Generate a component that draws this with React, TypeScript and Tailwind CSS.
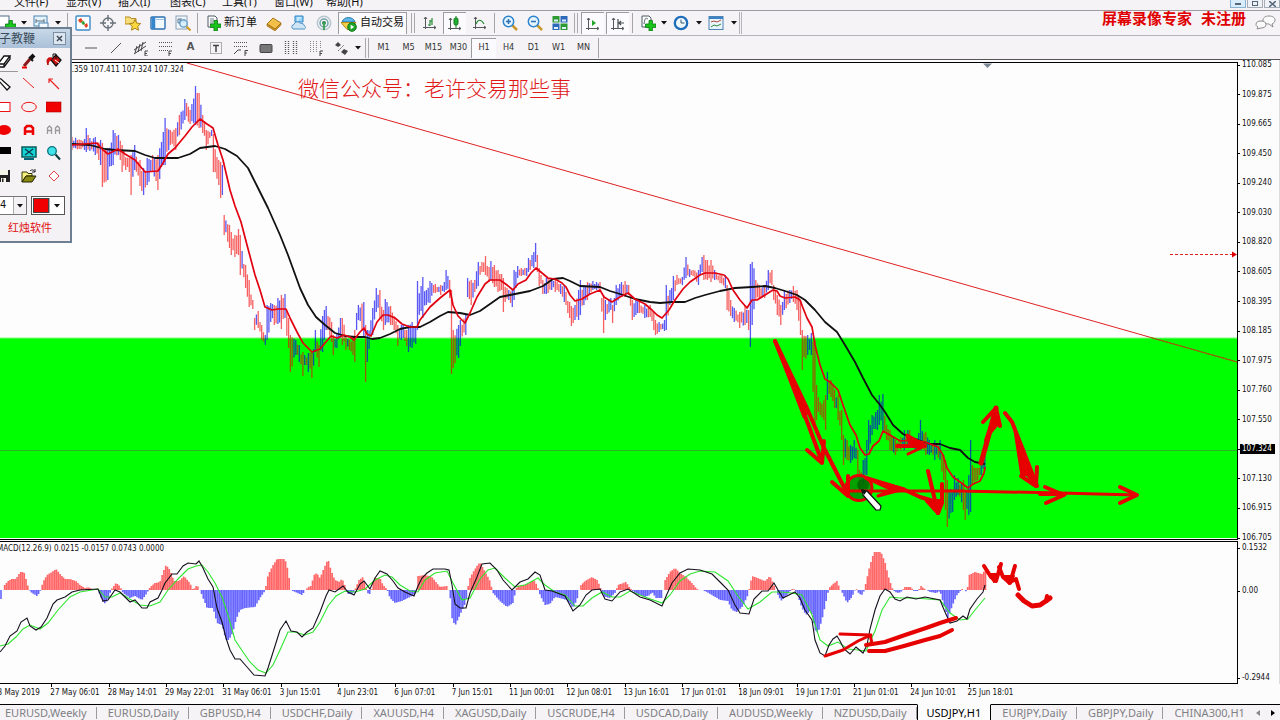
import type { ReactNode } from 'react';

type Pt = [number, number];

const MENU = ['文件(F)', '显示(V)', '插入(I)', '图表(C)', '工具(T)', '窗口(W)', '帮助(H)'];
const PERIODS = ['M1', 'M5', 'M15', 'M30', 'H1', 'H4', 'D1', 'W1', 'MN'];
const PRICES = [
  '110.085', '109.875', '109.665', '109.450', '109.240', '109.030', '108.820', '108.605', '108.395',
  '108.185', '107.975', '107.760', '107.550', '107.324', '107.130', '106.915', '106.705',
];
const TIMES = [
  '23 May 2019', '27 May 06:01', '28 May 14:01', '29 May 22:01', '31 May 06:01', '3 Jun 15:01',
  '4 Jun 23:01', '6 Jun 07:01', '7 Jun 15:01', '11 Jun 00:01', '12 Jun 08:01', '13 Jun 16:01',
  '17 Jun 01:01', '18 Jun 09:01', '19 Jun 17:01', '21 Jun 01:01', '24 Jun 10:01', '25 Jun 18:01',
];
const TABS = [
  'EURUSD,Weekly', 'EURUSD,Daily', 'GBPUSD,H4', 'USDCHF,Daily', 'XAUUSD,H4', 'XAGUSD,Daily', 'USCRUDE,H4',
  'USDCAD,Daily', 'AUDUSD,Weekly', 'NZDUSD,Daily', 'USDJPY,H1', 'EURJPY,Daily', 'GBPJPY,Daily', 'CHINA300,H1',
];

// x, high, low
const RANGE = [
  72, 137, 150, 84, 139, 150, 87, 128, 152, 90, 138, 151, 95, 137, 155, 100, 140, 165, 103, 143, 187, 108, 148, 180, 113, 130, 165,
  118, 135, 155, 122, 145, 172, 130, 158, 172, 131, 155, 195, 135, 145, 170, 140, 160, 186, 143, 168, 195, 148, 158, 185,
  152, 155, 172, 158, 155, 190, 163, 132, 165, 165, 118, 165, 170, 130, 145, 175, 128, 150, 180, 115, 135, 185, 99, 120,
  190, 110, 124, 196, 86, 125, 199, 93, 128, 203, 115, 133, 207, 130, 150, 211, 130, 136, 214, 134, 172, 218, 160, 185,
  221, 162, 198, 223, 165, 195, 225, 215, 235, 229, 225, 248, 232, 232, 255, 235, 235, 257, 238, 229, 255, 241, 235, 275,
  245, 265, 288, 249, 280, 307, 252, 300, 309, 254, 318, 330, 258, 311, 328, 262, 325, 340, 265, 335, 345, 268, 305, 340,
  271, 303, 322, 275, 305, 325, 278, 298, 324, 281, 295, 329, 285, 294, 318, 288, 318, 348, 291, 335, 372, 295, 340, 355,
  299, 345, 362, 303, 352, 376, 305, 355, 365, 308, 353, 372, 312, 352, 378, 316, 330, 352, 319, 345, 367, 322, 316, 352,
  325, 310, 340, 327, 306, 330, 331, 322, 342, 333, 335, 355, 337, 334, 348, 340, 318, 338, 343, 318, 345, 346, 335, 350,
  350, 340, 350, 354, 330, 362, 356, 313, 330, 359, 305, 320, 363, 302, 338, 365, 325, 382, 368, 330, 362, 372, 308, 335,
  376, 288, 312, 380, 290, 318, 383, 310, 330, 386, 299, 325, 390, 306, 325, 395, 316, 330, 398, 325, 346, 403, 325, 338,
  408, 325, 352, 412, 322, 348, 415, 328, 344, 418, 281, 330, 422, 277, 318, 426, 290, 305, 430, 281, 303, 435, 284, 293,
  440, 285, 295, 444, 282, 292, 447, 270, 290, 449, 280, 298, 451, 290, 374, 454, 330, 368, 458, 325, 358, 461, 320, 346,
  465, 315, 335, 467, 278, 297, 471, 280, 305, 475, 280, 292, 478, 262, 286, 482, 262, 272, 485, 256, 275, 489, 267, 282,
  491, 261, 280, 494, 265, 287, 498, 270, 292, 502, 274, 290, 503, 278, 312, 508, 290, 300, 512, 290, 307, 515, 270, 300,
  517, 266, 278, 521, 268, 276, 526, 268, 276, 529, 258, 272, 533, 252, 268, 535, 243, 262, 538, 255, 272, 540, 268, 286,
  543, 280, 294, 547, 278, 294, 552, 278, 290, 556, 280, 292, 561, 284, 294, 565, 285, 302, 569, 302, 318, 572, 306, 326,
  575, 305, 320, 578, 290, 320, 580, 280, 315, 584, 285, 305, 588, 282, 300, 592, 281, 290, 596, 282, 290, 600, 282, 292,
  603, 295, 333, 606, 300, 320, 610, 298, 310, 612, 305, 323, 617, 285, 305, 621, 282, 297, 625, 281, 297, 629, 285, 295,
  632, 300, 320, 636, 300, 315, 640, 302, 313, 645, 305, 318, 650, 305, 317, 654, 312, 330, 656, 320, 335, 660, 322, 332,
  664, 320, 331, 667, 285, 330, 670, 290, 305, 673, 276, 300, 677, 275, 285, 682, 277, 285, 686, 257, 278, 690, 269, 277,
  694, 270, 276, 698, 270, 285, 702, 257, 272, 704, 255, 280, 707, 260, 280, 711, 260, 282, 715, 270, 280, 720, 275, 283,
  725, 275, 288, 728, 285, 310, 731, 300, 316, 735, 308, 322, 740, 312, 328, 745, 305, 325, 749, 310, 330, 751, 264, 347,
  753, 262, 325, 756, 280, 300, 760, 285, 298, 765, 285, 298, 768, 270, 290, 771, 270, 285, 774, 285, 300, 778, 295, 315,
  781, 305, 325, 785, 290, 310, 790, 290, 303, 793, 286, 302, 797, 290, 310, 800, 300, 335, 803, 330, 370, 808, 335, 355,
  812, 333, 355, 814, 340, 425, 817, 385, 420, 821, 402, 415, 825, 395, 430, 827, 372, 400, 831, 380, 397, 835, 390, 408,
  838, 395, 420, 841, 410, 440, 843, 435, 465, 847, 440, 460, 851, 445, 463, 855, 440, 458, 858, 450, 475, 860, 470, 490,
  864, 460, 485, 866, 440, 475, 869, 420, 450, 873, 415, 435, 877, 410, 430, 880, 395, 425, 883, 394, 430, 886, 425, 440,
  890, 430, 450, 895, 440, 455, 900, 437, 450, 905, 430, 450, 910, 430, 448, 915, 440, 450, 921, 420, 450, 925, 432, 455,
  930, 440, 455, 935, 440, 460, 940, 440, 460, 943, 455, 480, 945, 460, 510, 948, 480, 527, 952, 490, 512, 955, 475, 500,
  958, 478, 495, 963, 480, 510, 966, 490, 520, 969, 475, 515, 970, 440, 512, 973, 465, 485, 977, 468, 480, 981, 462, 475,
  985, 440, 470,
];

const FAST_MA =
  '72,145 97,143 103,150 108,154 118,149 125,154 135,160 145,172 158,171 163,163 168,154 175,148 185,136 192,127 200,119 207,124 213,128 218,145 223,160 230,190 235,206 241,222 247,245 255,275 260,290 265,307 272,310 278,309 286,309 291,320 297,332 303,343 312,352 320,349 325,343 331,336 337,338 344,335 350,337 354,340 360,332 364,328 367,334 371,336 377,322 383,315 388,315 395,318 402,324 410,327 417,327 420,320 430,307 440,298 450,290 453,305 458,316 465,323 470,313 477,297 485,284 490,280 500,280 507,285 513,290 518,284 526,280 531,273 536,268 542,273 548,278 555,279 562,283 566,287 570,295 575,301 582,299 590,294 600,290 604,297 612,302 620,297 628,293 635,299 645,304 652,310 657,315 662,318 669,310 675,300 683,289 690,282 700,275 705,273 715,273 724,275 728,279 733,290 740,300 747,308 752,300 757,300 765,295 773,290 777,291 780,296 785,298 795,297 800,300 803,308 807,318 812,327 815,345 820,365 825,379 830,382 838,390 843,405 850,425 856,435 860,448 865,455 869,454 873,446 879,441 883,431 890,435 900,441 912,440 925,442 938,447 943,455 947,468 953,477 960,482 968,488 973,484 980,481 984,473 985,467';
const SLOW_MA =
  '72,144 90,145 105,149 115,150 135,151 145,155 155,158 165,158 178,158 190,154 200,148 215,146 225,149 237,156 248,168 258,188 268,208 280,235 288,255 300,288 308,305 316,317 325,325 335,333 345,336 355,337 365,337 372,339 380,338 390,334 400,329 410,327 420,327 430,322 440,316 448,312 460,313 470,315 480,311 490,304 500,297 510,295 520,293 530,291 543,286 553,279 563,278 570,281 580,286 600,287 610,291 620,294 635,299 650,302 660,303 672,302 685,302 695,298 705,295 720,291 735,288 752,287 765,286 775,288 785,291 797,295 805,300 815,310 825,322 837,332 845,345 855,362 863,378 872,395 880,405 885,412 893,425 903,434 912,438 930,444 940,444 950,448 960,450 968,458 975,462 985,464';
const MACD_LINE =
  '0,652 5,646 10,636 17,631 21,622 27,618 30,626 36,630 41,627 47,618 53,604 57,600 65,597 72,592 80,590 98,589 103,601 108,600 115,590 120,592 125,597 130,602 135,600 142,608 147,608 150,602 158,598 162,590 165,583 172,574 177,574 183,566 188,563 196,564 199,561 203,568 208,579 213,587 217,608 222,622 226,638 230,650 235,659 240,659 247,667 254,675 265,676 268,668 275,646 280,630 286,621 291,631 297,632 302,637 307,632 313,628 320,612 326,596 329,590 335,592 343,586 348,592 354,595 360,584 364,581 370,589 375,578 380,571 387,574 393,581 398,588 405,592 414,596 418,586 422,578 427,573 433,569 445,569 449,570 452,585 455,604 460,608 466,608 470,593 477,577 482,564 490,563 497,570 503,580 512,590 520,582 528,579 535,572 540,575 545,590 552,591 565,596 573,611 580,605 586,595 592,590 600,589 605,599 612,601 620,592 628,589 640,597 650,600 662,606 667,594 672,583 680,573 688,569 700,570 712,574 720,582 728,590 735,605 740,613 749,614 754,599 762,591 768,591 774,583 778,590 783,598 795,592 800,598 805,610 812,620 815,640 820,653 825,656 829,645 833,639 837,636 840,641 844,649 850,654 856,647 863,653 867,645 870,629 875,610 880,596 885,589 890,592 895,599 900,601 907,597 916,599 925,597 940,600 945,612 950,623 957,621 963,616 967,619 970,609 977,599 983,592 985,585';
const SIGNAL_LINE =
  '0,646 8,644 16,637 23,629 30,625 40,629 48,623 58,610 70,597 80,592 98,589 105,597 112,597 120,593 128,598 140,605 150,606 160,602 168,590 178,579 188,569 196,566 202,565 208,572 215,583 222,597 228,615 235,640 243,652 250,662 258,670 266,673 273,665 280,650 288,632 295,632 305,635 313,632 320,622 328,606 336,596 345,591 355,592 365,589 375,580 385,575 392,577 400,585 410,591 418,592 425,580 435,573 447,571 453,583 462,600 470,598 480,579 488,570 495,568 505,578 515,587 525,585 538,578 545,585 555,592 565,595 575,606 583,606 592,598 602,592 612,597 620,597 630,591 645,597 662,603 670,595 680,581 690,574 700,571 715,572 728,581 738,596 748,609 760,602 772,592 780,592 792,593 802,595 812,615 820,640 828,646 838,642 848,649 858,650 866,651 875,631 882,610 890,597 900,598 915,598 940,600 950,613 960,620 968,619 975,610 985,598';

// x, height above (+) or below (-) the zero line
const HIST = [
  0, -9, 2, -9, 3, 3, 8, 9, 12, 11, 16, 11, 20, 18, 24, 18, 27, 8, 29, 0, 32, -3, 37, -6, 40, -2, 43, 8, 47, 15, 52, 18, 56, 21, 60, 16,
  65, 11, 70, 11, 76, 9, 80, 5, 85, 2, 88, 3, 92, 1, 98, 0, 100, -5, 104, -14, 108, -10, 111, 0, 116, 7, 120, 4, 123, -3,
  130, -8, 135, -6, 142, -10, 147, -3, 150, 3, 155, 7, 160, 8, 163, 18, 166, 25, 170, 20, 174, 9, 179, 9, 184, 14, 190, 7,
  193, 0, 197, 5, 200, 0, 203, -8, 207, -18, 213, -18, 217, -33, 222, -35, 226, -50, 229, -50, 233, -42, 236, -30, 240, -20,
  245, -18, 255, -17, 260, -8, 265, -1, 268, 15, 273, 25, 277, 31, 285, 31, 288, 20, 291, 0, 295, -2, 302, -5, 305, -1,
  308, 3, 311, 4, 314, 15, 317, 17, 320, 12, 324, 22, 328, 31, 331, 20, 335, 10, 340, 8, 342, 12, 345, 4, 347, -4, 353, -4,
  356, 3, 359, 10, 363, 13, 366, 2, 369, -6, 372, 2, 374, 12, 380, 12, 383, 5, 387, 1, 390, -8, 395, -13, 402, -11, 410, -7,
  416, -3, 418, 14, 425, 15, 432, 13, 436, 8, 440, 3, 447, 4, 450, -5, 452, -28, 455, -36, 460, -25, 466, -12, 469, 10,
  473, 18, 477, 24, 480, 28, 483, 22, 487, 15, 490, 9, 493, -3, 500, -11, 507, -17, 513, -13, 517, 4, 522, 5, 528, 6,
  534, 10, 537, 5, 540, -5, 545, -15, 550, -14, 555, -7, 560, -8, 567, -10, 573, -18, 577, -10, 580, 4, 585, 9, 592, 13,
  597, 10, 600, 4, 603, -6, 610, -8, 615, -3, 618, 5, 626, 8, 630, 2, 635, -3, 645, -7, 650, -5, 652, -2, 656, -8, 662, -8,
  665, 10, 670, 18, 675, 22, 680, 17, 686, 13, 692, 7, 697, 1, 705, -1, 712, -5, 720, -10, 728, -11, 732, -20, 737, -22,
  743, -16, 748, -5, 750, 5, 752, 14, 760, 11, 765, 9, 770, 14, 774, 5, 777, -3, 781, -11, 788, -4, 793, 2, 797, -3,
  802, -18, 806, -25, 811, -20, 815, -40, 818, -43, 822, -30, 826, -12, 829, 2, 833, 6, 837, 9, 840, 1, 843, -4, 847, -13,
  852, -7, 856, 2, 859, -4, 863, -5, 866, 8, 870, 25, 874, 38, 881, 38, 885, 28, 889, 12, 893, 0, 897, -3, 901, -2, 905, 3,
  911, 3, 914, -1, 918, -1, 921, 4, 925, 1, 930, -2, 936, -3, 940, -1, 943, -12, 948, -28, 953, -14, 957, -5, 962, 1,
  967, -2, 969, 15, 975, 18, 982, 16, 985, 20,
];

const STEP = 1.79;
const ZERO = 590;

function sample(data: number[], width: number, col: number, x: number) {
  for (let i = 0; i + width < data.length; i += width) {
    const a = data[i];
    const b = data[i + width];
    if (x <= b) {
      const t = Math.max(0, (x - a) / (b - a));
      return data[i + col] + (data[i + width + col] - data[i + col]) * t;
    }
  }
  return data[data.length - width + col];
}

// Index of the keyframe that falls on this bar, or -1
function keyAt(x: number) {
  for (let i = 0; i < RANGE.length; i += 3) {
    if (Math.abs(RANGE[i] - x) <= STEP / 2) return i;
  }
  return -1;
}

function noise(n: number) {
  const s = Math.sin(n * 12.9898) * 43758.5453;
  return s - Math.floor(s);
}

function buildBars() {
  let up = '';
  let down = '';
  let prev = 143;
  for (let i = 0; 72 + i * STEP < 986; i++) {
    const x = 72 + i * STEP;
    const key = keyAt(x);
    let top: number;
    let bottom: number;
    if (key >= 0) {
      top = RANGE[key + 1];
      bottom = RANGE[key + 2];
    } else {
      const high = sample(RANGE, 3, 1, x);
      const low = sample(RANGE, 3, 2, x);
      const span = low - high;
      top = high + noise(i) * span * 0.3;
      bottom = low - noise(i + 500) * span * 0.3;
    }
    const mid = (top + bottom) / 2;
    const seg = `M${x.toFixed(1)} ${top.toFixed(1)}V${bottom.toFixed(1)}`;
    if (mid + (noise(i + 90) - 0.5) * 14 < prev) up += seg;
    else down += seg;
    prev = mid;
  }
  return { up, down };
}

function buildHist() {
  let pos = '';
  let neg = '';
  for (let x = 1; x < 987; x += STEP) {
    const v = sample(HIST, 2, 1, x);
    if (Math.abs(v) < 0.6) continue;
    const seg = `M${x.toFixed(1)} ${ZERO}v${(-v).toFixed(1)}`;
    if (v > 0) pos += seg;
    else neg += seg;
  }
  return { pos, neg };
}

const bars = buildBars();
const hist = buildHist();

function Icon({ children, size = 16 }: { children: ReactNode; size?: number }) {
  return (
    <svg width={size} height={size} viewBox="0 0 16 16" fill="none" className="shrink-0">
      {children}
    </svg>
  );
}

function Tool({ label, children, className = 'w-[25px]' }: { label: string; children: ReactNode; className?: string }) {
  return (
    <button aria-label={label} className={`flex h-[22px] shrink-0 items-center justify-center ${className}`}>
      {children}
    </button>
  );
}

function Caret() {
  return (
    <svg width="6" height="4" viewBox="0 0 6 4" className="shrink-0">
      <path d="M0 0h6L3 3.6z" fill="#111" />
    </svg>
  );
}

function Sep() {
  return <span className="mx-[2px] h-[20px] w-px shrink-0 bg-[#a5a5a8]" />;
}

function Grip() {
  return <span className="mx-[2px] h-[20px] w-[4px] shrink-0 border-x border-[#a9a9ac]" />;
}

const PRESSED = 'w-[23px] mx-px border-l border-t border-[#9c9ca0] bg-[#fbfafc]';

const plus = (
  <path d="M9 5.5h3.4V9H16v3.4h-3.6V16H9v-3.6H5.5V9H9z" fill="#19c51c" stroke="#0b7a10" strokeWidth=".8" />
);

const axes = <path d="M3.5 2v12M1 12.5h13M2 4l1.5-2L5 4M12 11l2 1.5-2 1.5" stroke="#55595c" />;

function MainToolbar() {
  return (
    <div className="flex h-[25px] items-center border-t border-[#9d9da1]">
      <Tool label="新图表" className="w-[16px]">
        <Icon><rect x="-1" y="1" width="10" height="11" fill="#fff" stroke="#4a6d84" />{plus}</Icon>
      </Tool>
      <Tool label="新图表菜单" className="w-[15px]"><Caret /></Tool>
      <Tool label="模板" className="w-[20px]">
        <Icon>
          <rect x="1" y="1" width="13" height="10" fill="#e6f3fb" stroke="#4d86b4" />
          <path d="M3 4v4M3 6h8M11 4v4" stroke="#5c6f7e" />
          <rect x="6" y="8" width="9" height="7" fill="#f4faff" stroke="#4d86b4" />
        </Icon>
      </Tool>
      <Tool label="模板菜单" className="w-[14px]"><Caret /></Tool>
      <Sep />
      <Tool label="市场报价">
        <Icon>
          <rect x="1" y="1" width="14" height="14" rx="1" fill="#fff" stroke="#3c8ccb" strokeWidth="1.4" />
          <path d="M3 5l3-2 2 3-3 2z" fill="#e5401f" /><path d="M6 7l3-1 1 3-2 1z" fill="#2aa02f" />
          <path d="M9 10l3-2 1 3-2 2z" fill="#e5401f" />
        </Icon>
      </Tool>
      <Tool label="数据窗口">
        <Icon>
          <circle cx="8" cy="8" r="5" stroke="#667079" strokeWidth="1.3" />
          <path d="M8 0v6M8 10v6M0 8h6M10 8h6" stroke="#667079" strokeWidth="1.4" />
        </Icon>
      </Tool>
      <Tool label="导航">
        <Icon>
          <path d="M0 2h5l1 1.500h5V9H0z" fill="#f7dc77" stroke="#b58d26" />
          <path d="M10 4.500l1.700 3.600 4 .5-2.900 2.700.7 3.900-3.500-1.900-3.500 1.900.7-3.900L4.300 8.600l4-.5z" fill="#fbd83d" stroke="#a8801c" />
        </Icon>
      </Tool>
      <Tool label="终端">
        <Icon>
          <rect x="1" y="2" width="14" height="12" rx="1" fill="#f2f9ff" stroke="#2b6fae" strokeWidth="1.4" />
          <path d="M3.500 2v12" stroke="#3686cd" strokeWidth="3.500" /><path d="M6 4.500h8" stroke="#9cc4e2" />
        </Icon>
      </Tool>
      <Tool label="策略测试">
        <Icon>
          <rect x="1" y="1" width="11" height="13" fill="#f2f6fa" stroke="#8aa2b5" />
          <path d="M3 4h2v4H3zM6 3v5M9 4v4" stroke="#58768d" />
          <circle cx="8.500" cy="8.500" r="3.700" fill="#d7edfb" fillOpacity=".8" stroke="#5a9bcd" strokeWidth="1.300" />
          <path d="M11.500 11.500l4 4" stroke="#d19a20" strokeWidth="2" />
        </Icon>
      </Tool>
      <Sep />
      <button className="flex h-[22px] w-[61px] shrink-0 items-center gap-[3px] pl-[5px]">
        <Icon>
          <path d="M3 1h7l2 2v9H3z" fill="#fff" stroke="#4b5a66" /><path d="M5 4h4M5 6h5M5 8h3" stroke="#6d7f8c" />{plus}
        </Icon>
        <span className="whitespace-nowrap">新订单</span>
      </button>
      <Tool label="编辑器">
        <Icon>
          <path d="M1 9l6-6 8 5-6 6z" fill="#f2c04a" stroke="#a8761a" /><path d="M1 9v2l8 5 6-6V8l-6 6z" fill="#c98f23" stroke="#a06d12" strokeWidth=".6" />
        </Icon>
      </Tool>
      <Tool label="虚拟主机">
        <Icon>
          <path d="M4 1h8v6H4z" fill="#8fd0f7" stroke="#2f84c4" /><path d="M6 3h4M6 5h2" stroke="#fff" />
          <path d="M2 14a2.500 2.500 0 0 1 1-4.600A3.500 3.500 0 0 1 9.500 8.600 3 3 0 0 1 13.500 11 1.700 1.700 0 0 1 13.600 14z" fill="#cfe5f5" stroke="#4f93c6" />
        </Icon>
      </Tool>
      <Tool label="信号">
        <Icon>
          <circle cx="8" cy="8" r="6.700" stroke="#b7c7d0" strokeWidth="1.500" /><circle cx="8" cy="8" r="4" stroke="#6fa4a8" strokeWidth="1.500" />
          <circle cx="8" cy="8" r="2" fill="#2f8b50" /><path d="M8 8v7" stroke="#43a35d" strokeWidth="2" />
        </Icon>
      </Tool>
      <button className="mx-[2px] flex h-[22px] w-[69px] shrink-0 items-center gap-[3px] border border-b-0 border-[#9c9ca0] bg-[#fbfafc] pl-[2px]">
        <Icon>
          <path d="M1 6c2-6 11-6 13 0z" fill="#5cb7ea" stroke="#2a78a8" /><path d="M0 6.500h15l-6 7H6z" fill="#f4cf49" stroke="#b58a1d" />
          <circle cx="11" cy="11" r="4.300" fill="#20a72a" stroke="#0c7517" /><path d="M9.700 8.800v4.400L13.200 11z" fill="#fff" />
        </Icon>
        <span className="whitespace-nowrap">自动交易</span>
      </button>
      <Grip />
      <Tool label="柱状图"><Icon>{axes}<path d="M8 5v6M8 6h2M10 3v7M6 10h2" stroke="#258a33" strokeWidth="1.200" /></Icon></Tool>
      <Tool label="阴阳烛" className={PRESSED}>
        <Icon>{axes}<path d="M9 0v12" stroke="#138223" /><rect x="7" y="2" width="4" height="7" rx="1.500" fill="#1fae31" stroke="#107a1e" /></Icon>
      </Tool>
      <Tool label="折线图"><Icon>{axes}<path d="M4 9c2-5 5-5 8 0" stroke="#258a33" strokeWidth="1.200" /></Icon></Tool>
      <Sep />
      <Tool label="放大">
        <Icon>
          <path d="M10 10l5 5" stroke="#c7972b" strokeWidth="2.500" /><circle cx="6.500" cy="6.500" r="5.200" fill="#e4f4ff" stroke="#2d83cc" strokeWidth="1.500" />
          <path d="M4 6.500h5M6.500 4v5" stroke="#2a6fb4" strokeWidth="1.500" />
        </Icon>
      </Tool>
      <Tool label="缩小">
        <Icon>
          <path d="M10 10l5 5" stroke="#c7972b" strokeWidth="2.500" /><circle cx="6.500" cy="6.500" r="5.200" fill="#e4f4ff" stroke="#2d83cc" strokeWidth="1.500" />
          <path d="M4 6.500h5" stroke="#2a6fb4" strokeWidth="1.500" />
        </Icon>
      </Tool>
      <Tool label="平铺">
        <Icon>
          <rect x=".5" y="1" width="7" height="6.500" fill="#2d9a34" /><rect x="8.500" y="1" width="7" height="6.500" fill="#2c68ba" />
          <rect x=".5" y="8.500" width="7" height="6.500" fill="#2c68ba" /><rect x="8.500" y="8.500" width="7" height="6.500" fill="#2d9a34" />
          <path d="M2 4.500h4v2H2zM10 4.500h4v2h-4zM2 12h4v2H2zM10 12h4v2h-4z" fill="#dff0ff" />
        </Icon>
      </Tool>
      <Grip />
      <Tool label="自动滚动" className={PRESSED}><Icon>{axes}<path d="M7 4v6l4-3z" fill="#20a72a" /></Icon></Tool>
      <Tool label="图表平移" className={PRESSED}><Icon>{axes}<path d="M8 3v9M14 7H9M11 5L9 7l2 2" stroke="#474b4e" strokeWidth="1.200" /></Icon></Tool>
      <Sep />
      <Tool label="指标">
        <Icon><path d="M2 1h7l2 2v9H2z" fill="#fff" stroke="#4b5a66" /><path d="M4 9c1-7 2-6 4-5" stroke="#55606a" />{plus}</Icon>
      </Tool>
      <Tool label="指标菜单" className="w-[7px]"><Caret /></Tool>
      <Tool label="周期" className="w-[28px]">
        <Icon>
          <circle cx="8" cy="8" r="6.200" fill="#f2faff" stroke="#1d6dbb" strokeWidth="2.300" /><path d="M8 4.500V8h3.500" stroke="#33566f" />
        </Icon>
      </Tool>
      <Tool label="周期菜单" className="w-[7px]"><Caret /></Tool>
      <Tool label="图表模板" className="w-[28px]">
        <Icon>
          <rect x="1" y="1.500" width="14" height="13" fill="#eaf5ff" stroke="#4a83b4" /><path d="M1 3h14" stroke="#3c82c4" strokeWidth="2" />
          <path d="M3 7l3-1 3 1 4-2" stroke="#b04432" /><path d="M3 12l3-2 3 1 4-2" stroke="#2a8a39" />
        </Icon>
      </Tool>
      <Tool label="图表模板菜单" className="w-[7px]"><Caret /></Tool>
      <span className="ml-[2px] h-[22px] w-[3px] border-x border-[#b5b5b9]" />
    </div>
  );
}

function LineToolbar() {
  return (
    <div className="flex h-[24px] items-center border-t border-[#b3b3b7] pl-[78px]">
      <Tool label="水平线"><Icon><path d="M2 8h12" stroke="#555" /></Icon></Tool>
      <Tool label="趋势线"><Icon><path d="M3 13L13 3" stroke="#555" /></Icon></Tool>
      <Tool label="通道">
        <Icon><path d="M1 10l12-8M1 14l12-8M4 6l-2 7M7 4L5 12M10 2L8 11" stroke="#444" /><path d="M15 11h-3v5h3M12 13.500h2" stroke="#444" /></Icon>
      </Tool>
      <Tool label="斐波纳契">
        <Icon><path d="M1 2.500h13M1 6.500h13M1 10.500h9" stroke="#555" strokeDasharray="1 1" /><path d="M14 11h-3v5M11 13.500h2" stroke="#444" /></Icon>
      </Tool>
      <Tool label="文字"><span className="text-[11px] font-bold text-[#555]">A</span></Tool>
      <Tool label="文字标签">
        <Icon><rect x="2.500" y="2.500" width="11" height="11" stroke="#666" strokeDasharray="1 1" /><path d="M5 5.500h6M8 5.500V12" stroke="#444" strokeWidth="1.500" /></Icon>
      </Tool>
      <Tool label="扇形">
        <Icon><path d="M1 2.500h14M1 6.500h14" stroke="#555" strokeDasharray="1 1" /><path d="M1 14l4-4h3M15 10.500h-3V16M12 13h2" stroke="#444" /></Icon>
      </Tool>
      <Tool label="矩形"><Icon><rect x="2" y="4.500" width="12" height="8" rx="1" fill="#777" stroke="#444" /></Icon></Tool>
      <Tool label="周期线">
        <Icon><path d="M2.500 1v14M5.500 1v14M10.500 1v14M13.500 1v14" stroke="#555" strokeDasharray="1 1" strokeWidth="1.300" /></Icon>
      </Tool>
      <Tool label="时区">
        <Icon><path d="M2.500 1v11M5.500 1v11M8.500 1v11M12.500 1v8" stroke="#888" strokeDasharray="1 1" /><path d="M15 11h-3v5M12 13.500h2" stroke="#444" /></Icon>
      </Tool>
      <Tool label="箭头">
        <Icon><path d="M2 5l3-3 3 3-3 2zM8 12l3-3 4 2-3 4z" fill="#444" /><path d="M5 11l6-6" stroke="#666" strokeDasharray="2 1" /></Icon>
      </Tool>
      <Tool label="箭头菜单" className="w-[10px]"><Caret /></Tool>
      <Grip />
      {PERIODS.map((p) => (
        <button
          key={p}
          className={`flex h-[20px] w-[25px] shrink-0 items-center justify-center text-[9px] text-[#333] ${
            p === 'H1' ? 'border-l border-t border-[#9c9ca0] bg-[#fbfafc]' : ''
          }`}
        >
          {p}
        </button>
      ))}
      <Sep />
    </div>
  );
}

function PaletteTool({ label, children }: { label: string; children: ReactNode }) {
  return (
    <button aria-label={label} className="flex h-[23px] items-center justify-center">
      <Icon>{children}</Icon>
    </button>
  );
}

function Palette() {
  return (
    <section className="absolute -left-[9px] top-[27px] z-20 w-[81px] border-2 border-l-0 border-[#6e7f92] bg-[#f4f2f5] pb-[3px]">
      <header className="flex h-[19px] items-center justify-between bg-linear-to-b from-[#c7d8e8] to-[#abc1d8] pr-[4px] text-[12px] text-[#3c4c5c]">
        <span className="-ml-[4px] whitespace-nowrap">电子教鞭</span>
        <button aria-label="关闭" className="flex h-[13px] w-[13px] items-center justify-center border border-[#7d90a3] bg-[#dbe6f0]">
          <svg width="7" height="7" viewBox="0 0 7 7"><path d="M1 1l5 5M6 1L1 6" stroke="#3f4c58" strokeWidth="1.500" /></svg>
        </button>
      </header>
      <div className="grid grid-cols-3 pt-px pr-[4px]">
        <PaletteTool label="橡皮"><path d="M2 11l6-8h6l-6 8zM2 11v3h6v-3M8 14l6-8V3" fill="#fff" stroke="#111" strokeWidth="1.300" /></PaletteTool>
        <PaletteTool label="画笔"><path d="M9 6L3 13" stroke="#8b1a1a" strokeWidth="3" /><path d="M8 4l4 4" stroke="#111" strokeWidth="2" /><path d="M10 5l3-3" stroke="#111" strokeWidth="4" /><path d="M1 14.500h5" stroke="#e00" strokeWidth="2" /></PaletteTool>
        <PaletteTool label="填充"><path d="M5 7l5-5 5 5-5 6z" fill="#c11" stroke="#111" strokeWidth="1.300" /><path d="M7 4V1h3v5" stroke="#111" /><path d="M6 5C1 4 0 7 2 12c0-3 1-4 3-5z" fill="#d11" stroke="#b00" /><path d="M9 7l4 3" stroke="#fff" /></PaletteTool>
        <span className="col-span-3 -mt-px mr-[48px] h-px bg-[#999]" />
        <PaletteTool label="铅笔"><path d="M2 2l3 1 9 8-3 3-8-9z" fill="#fff" stroke="#111" strokeWidth="1.300" /><path d="M2 2l2 1-1 1z" fill="#111" stroke="#111" /></PaletteTool>
        <PaletteTool label="直线"><path d="M2 2l11 10" stroke="#e22" /></PaletteTool>
        <PaletteTool label="箭头"><path d="M3 3l10 10M3 7V3h4" stroke="#e22" strokeWidth="1.200" /></PaletteTool>
        <PaletteTool label="矩形"><rect x="1" y="3.500" width="13" height="9" fill="#fff" stroke="#e11" /></PaletteTool>
        <PaletteTool label="椭圆"><ellipse cx="8" cy="8" rx="7.300" ry="4.700" stroke="#e11" /></PaletteTool>
        <PaletteTool label="实心矩形"><rect x="0" y="3" width="15" height="10" fill="#f00000" stroke="#a00" strokeWidth=".6" /></PaletteTool>
        <PaletteTool label="实心椭圆"><ellipse cx="8" cy="8" rx="7" ry="5" fill="#f00000" /></PaletteTool>
        <PaletteTool label="文字"><path d="M4 13V6l2-2h4l2 2v7M4 9.500h8" stroke="#e00" strokeWidth="2.500" /></PaletteTool>
        <PaletteTool label="双文字"><path d="M1.500 12V6l2-2 2 2v6M1.500 8.500h4M9.500 12V6l2-2 2 2v6M9.500 8.500h4" stroke="#999" strokeWidth="1.300" /></PaletteTool>
        <PaletteTool label="黑屏"><rect x="0" y="2" width="15" height="7" fill="#000" /></PaletteTool>
        <PaletteTool label="屏幕"><rect x="1" y="2" width="14" height="10" fill="#12d4d4" stroke="#075b5b" strokeWidth="1.500" /><path d="M4 4l8 6M12 4l-8 6" stroke="#134" strokeWidth="1.200" /><path d="M3 14h10" stroke="#067" strokeWidth="2" /></PaletteTool>
        <PaletteTool label="放大镜"><circle cx="6" cy="6" r="4.300" fill="#3fe3ea" stroke="#08727b" strokeWidth="1.300" /><path d="M9.500 9.500l4.500 5" stroke="#06373c" strokeWidth="2" /></PaletteTool>
        <PaletteTool label="保存"><path d="M2 2h12v12H2z" fill="#222" /><path d="M4 2h8v5H4zM5 10h5v4H5z" fill="#f5f5e8" /><path d="M6 10.500h1.500V14H6z" fill="#222" /></PaletteTool>
        <PaletteTool label="打开"><path d="M1 4h5l1 1.500h4V8H5l-4 6z" fill="#f5f080" stroke="#333300" /><path d="M1 14l4-6h10l-4 6z" fill="#8a8a12" stroke="#222200" /><path d="M9 3c2-2 4-1 5 1M14 1v3h-3" stroke="#222" /></PaletteTool>
        <PaletteTool label="清除"><path d="M8 3l5 5-5 5-5-5z" fill="#fff" stroke="#d44" /></PaletteTool>
      </div>
      <div className="mt-[9px] flex h-[19px] justify-between pr-[5px]">
        <div className="relative flex w-[36px] items-center border border-[#777] bg-white">
          <label className="sr-only" htmlFor="line-width" />
          <select id="line-width" defaultValue="4" className="h-full w-full appearance-none pl-[8px] text-[11px]">
            <option>4</option>
          </select>
          <span className="pointer-events-none absolute inset-y-0 right-0 flex w-[13px] items-center justify-center border-l border-[#aaa] bg-[#f4f2f5]"><Caret /></span>
        </div>
        <button aria-label="颜色" className="flex w-[34px] border border-[#555] bg-white p-px">
          <span className="h-full w-[16px] border border-[#444] bg-[#f00000]" />
          <span className="flex h-full flex-1 items-center justify-center border-l border-[#aaa]"><Caret /></span>
        </button>
      </div>
      <p className="mt-[6px] h-[17px] pl-[17px] text-[11px] leading-[16px] text-[#e01010]">红烛软件</p>
    </section>
  );
}

function PriceChart() {
  return (
    <div className="relative h-[478px] border-y border-r border-black bg-[#fefdfe]">
      <svg viewBox="0 63 1237 476" preserveAspectRatio="none" className="block h-full w-full" fill="none">
        <rect x="0" y="338" width="1237" height="200" fill="#00ff00" />
        <path d="M0 338h1237" stroke="#7dff7d" />
        <path d="M0 450.500h1237" stroke="#27b427" />
        <path d="M187 63L1237 362" stroke="#dd2222" />
        <path d="M1150 337.400L1237 362" stroke="#867000" />
        <path d={bars.up} stroke="#0000ee" strokeOpacity=".65" strokeWidth="1.300" />
        <path d={bars.down} stroke="#f00000" strokeOpacity=".62" strokeWidth="1.300" />
        <polyline points={SLOW_MA} stroke="#111" strokeWidth="1.800" strokeLinejoin="round" />
        <polyline points={FAST_MA} stroke="#e00010" strokeWidth="1.700" strokeLinejoin="round" />
        <path d="M983 63.500h9l-4.500 4.500z" fill="#7b8794" />
        <path d="M1170 254.500h62" stroke="#d22" strokeDasharray="3 2" />
        <path d="M1232 251.500l5 3-5 3z" fill="#d00" />
      </svg>
      <p className="absolute left-[58px] top-[1px] text-[8px] leading-[12px] whitespace-nowrap">107.359 107.411 107.324 107.324</p>
      <h1 className="absolute left-[298px] top-[12px] text-[21px] leading-[28px] font-light whitespace-nowrap text-[#e01818]">微信公众号：老许交易那些事</h1>
    </div>
  );
}

function MacdChart() {
  return (
    <div className="relative mt-px h-[143px] border-y border-r border-black bg-[#fefdfe]">
      <svg viewBox="0 542 1237 141" preserveAspectRatio="none" className="block h-full w-full" fill="none">
        <path d={hist.pos} stroke="#ff4040" strokeOpacity=".8" strokeWidth="1.600" />
        <path d={hist.neg} stroke="#4040ff" strokeOpacity=".8" strokeWidth="1.600" />
        <polyline points={SIGNAL_LINE} stroke="#2ee52e" strokeWidth="1.100" />
        <polyline points={MACD_LINE} stroke="#15101c" strokeWidth="1.100" />
      </svg>
      <p className="absolute -left-[3px] top-[1px] text-[8px] leading-[12px] whitespace-nowrap">MACD(12.26.9) 0.0215 -0.0157 0.0743 0.0000</p>
    </div>
  );
}

function Marker({ pts, w = 4 }: { pts: Pt[]; w?: number }) {
  return <polyline points={pts.map((p) => p.join(',')).join(' ')} strokeWidth={w} />;
}

// Pen strokes drawn over both panels
function Annotations() {
  return (
    <svg
      viewBox="0 60 1238 624"
      preserveAspectRatio="none"
      className="pointer-events-none absolute inset-0 h-full w-full"
      fill="none"
      stroke="#e60000"
      strokeLinecap="round"
      strokeLinejoin="round"
    >
      <circle cx="859" cy="488" r="12" fill="#008a00" fillOpacity=".8" stroke="none" />
      <circle cx="863" cy="485" r="6" fill="#005500" fillOpacity=".6" stroke="none" />
      <path d="M775 341l32 72-3 4z" fill="#e60000" strokeWidth="3" />
      <Marker pts={[[775, 341], [801, 405], [822, 462]]} />
      <Marker pts={[[775, 341], [806, 406], [824, 448], [848, 495]]} />
      <Marker pts={[[807, 450], [822, 463], [824, 441]]} />
      <Marker pts={[[832, 482], [848, 496], [848, 476]]} />
      <ellipse cx="859" cy="488" rx="13" ry="12.500" strokeWidth="3" />
      <path d="M868 479l36 10-26 7 14-6z" fill="#e60000" strokeWidth="3" />
      <Marker pts={[[866, 478], [905, 490], [920, 497], [940, 503]]} />
      <Marker pts={[[850, 491], [960, 491], [1060, 493], [1136, 495]]} w={3} />
      <Marker pts={[[928, 471], [933, 492], [938, 513]]} />
      <path d="M927 501l11 12 4-12z" fill="#e60000" strokeWidth="4" />
      <Marker pts={[[942, 484], [942, 503], [938, 513]]} />
      <Marker pts={[[897, 446], [925, 446]]} />
      <path d="M907 435l18 10-15 0z" fill="#e60000" strokeWidth="3" />
      <Marker pts={[[925, 446], [908, 454]]} w={3} />
      <Marker pts={[[981, 463], [988, 438], [996, 408]]} w={5} />
      <path d="M996 409l3 14-14 17z" fill="#e60000" strokeWidth="2" />
      <Marker pts={[[983, 422], [996, 408], [1000, 426]]} />
      <Marker pts={[[1005, 413], [1012, 422], [1023, 450], [1037, 486]]} />
      <path d="M1015 431l7 45 5-2 9 12-13-37z" fill="#e60000" strokeWidth="3" />
      <Marker pts={[[1021, 476], [1036, 486], [1037, 467]]} />
      <Marker pts={[[1045, 487], [1064, 495], [1046, 503]]} />
      <Marker pts={[[1120, 487], [1137, 495], [1120, 503]]} />
      <Marker pts={[[1040, 494], [1065, 494]]} />
      <path d="M862 490l5 1 14 15-1 4-4 0-13-15z" fill="#fff" stroke="#111" strokeWidth="1.200" />
      <path d="M861 489l6 2-3 4z" fill="#111" stroke="none" />
      <Marker pts={[[825, 656], [843, 650], [858, 641], [871, 635]]} w={3} />
      <Marker pts={[[840, 634], [870, 635], [872, 643]]} w={3} />
      <Marker pts={[[866, 645], [885, 642], [905, 635], [926, 628], [940, 623], [956, 618]]} />
      <Marker pts={[[869, 651], [885, 651], [904, 646], [925, 640], [940, 636], [952, 630]]} />
      <path d="M989 574l5 8 5-8zM1003 576l6 8 5-8z" fill="#e60000" strokeWidth="2" />
      <Marker pts={[[984, 566], [991, 577], [996, 581], [1001, 564]]} />
      <Marker pts={[[999, 567], [1003, 577], [1010, 583], [1015, 566]]} />
      <Marker pts={[[1006, 578], [1010, 582], [1016, 579], [1019, 589]]} />
      <Marker pts={[[1018, 595], [1024, 601], [1032, 606], [1040, 605], [1046, 601], [1050, 598]]} w={5} />
      <Marker pts={[[1047, 596], [1046, 601]]} />
    </svg>
  );
}

function AxisLabel({ text, active = false, className = '' }: { text: string; active?: boolean; className?: string }) {
  return (
    <span className={`flex h-[8px] items-center ${className}`}>
      <i className="h-px w-[2px] bg-black" />
      <span className={active ? 'bg-black pr-[3px] pl-[2px] leading-[10px] text-white' : 'pl-[2px] leading-[8px]'}>{text}</span>
    </span>
  );
}

export default function App() {
  return (
    <div className="relative min-h-screen w-full overflow-hidden bg-[#f5f3f6] font-['DejaVu_Sans_Condensed','Noto_Sans','Noto_Sans_CJK_SC',sans-serif] text-[11px] text-[#111]">
      <header className="relative h-[60px] border-b border-[#555]">
        <nav className="flex h-[10px] items-end justify-between overflow-hidden">
          <div className="flex items-end pl-[14px]">
            {MENU.map((m) => (
              <button key={m} className="w-[52px] text-left font-['Noto_Sans','Noto_Sans_CJK_SC',sans-serif] leading-[16px] whitespace-nowrap">{m}</button>
            ))}
          </div>
          <div className="flex gap-px self-start text-[#5a6b7a]">
            <button aria-label="最小化" className="flex h-[8px] w-[16px] items-center justify-center border border-t-0 border-[#89b3d4] bg-[#d9ecfa]"><i className="h-[2px] w-[6px] bg-[#54677a]" /></button>
            <button aria-label="还原" className="flex h-[8px] w-[16px] items-center justify-center border border-t-0 border-[#a4acb6] bg-[#eef1f5]"><i className="h-[5px] w-[6px] border border-[#54677a]" /></button>
            <button aria-label="关闭" className="flex h-[8px] w-[16px] items-center justify-center border border-t-0 border-[#a4acb6] bg-[#eef1f5]">
              <svg width="7" height="6" viewBox="0 0 7 6"><path d="M0 0l7 6M7 0L0 6" stroke="#54677a" strokeWidth="1.500" /></svg>
            </button>
          </div>
        </nav>
        <MainToolbar />
        <LineToolbar />
        <p className="absolute right-[34px] top-[10px] flex gap-[9px] text-[15px] leading-[18px] font-bold whitespace-nowrap text-[#e00000]">
          <span>屏幕录像专家</span><span>未注册</span>
        </p>
        <svg className="absolute right-[4px] top-[15px]" width="21" height="15" viewBox="0 0 21 15" fill="#fbfbfb" stroke="#8b8b8b">
          <path d="M14 1c4 0 6 2 6 4s-1 3-3 4l1 3-4-3c-4 0-6-2-6-4s2-4 6-4z" />
          <path d="M6 6c3 0 5 1 5 3.500S9 13 6 13l-4 1 1-2c-2-1-2-2-2-2.500C1 7 3 6 6 6z" />
        </svg>
      </header>
      <Palette />

      <main className="flex bg-[#fdfcfd] text-[8px]">
        <div className="relative min-w-0 flex-1">
          <div className="pt-[2px]">
            <PriceChart />
            <MacdChart />
          </div>
          <Annotations />
        </div>
        <aside className="w-[42px] shrink-0 border-r border-[#dcdce0]">
          <div className="flex h-[482px] flex-col justify-between pt-px">
            {PRICES.map((p) => <AxisLabel key={p} text={p} active={p === '107.324'} />)}
          </div>
          <AxisLabel text="0.1532" className="mt-[2px]" />
          <AxisLabel text="0.00" className="mt-[35px]" />
          <AxisLabel text="-0.2944" className="mt-[79px]" />
        </aside>
      </main>

      <div className="h-[20px] overflow-hidden bg-[#fdfcfd] text-[8px]">
        <div className="-ml-[6px] flex w-[1032px]">
          {TIMES.map((t) => (
            <span key={t} className="min-w-0 flex-1 whitespace-nowrap">
              <i className="block h-[3px] w-px bg-black" />
              <span className="-ml-px block leading-[11px]">{t}</span>
            </span>
          ))}
        </div>
      </div>

      <footer className="flex h-[16px] overflow-hidden font-['Noto_Sans',sans-serif] text-[11px] text-[#808084]">
        <div className="-ml-[6px] flex min-w-0 flex-1 overflow-hidden">
          {TABS.map((t) => {
            const active = t === 'USDJPY,H1';
            return (
              <button
                key={t}
                className={`flex shrink-0 items-center border-t border-black leading-[16px] ${
                  active ? 'border-x border-t-transparent bg-[#fdfcfd] px-[9px] text-black' : ''
                }`}
              >
                {active ? t : <span className="border-r border-[#9a9a9e] pr-[9px] pl-[11px] leading-[12px]">{t}</span>}
              </button>
            );
          })}
        </div>
        <div className="flex w-[30px] items-center justify-around border-t border-black">
          <button aria-label="向左"><svg width="4" height="6" viewBox="0 0 4 6"><path d="M4 0v6L0 3z" fill="#888" /></svg></button>
          <button aria-label="向右"><svg width="4" height="6" viewBox="0 0 4 6"><path d="M0 0v6l4-3z" fill="#000" /></svg></button>
        </div>
      </footer>
    </div>
  );
}
